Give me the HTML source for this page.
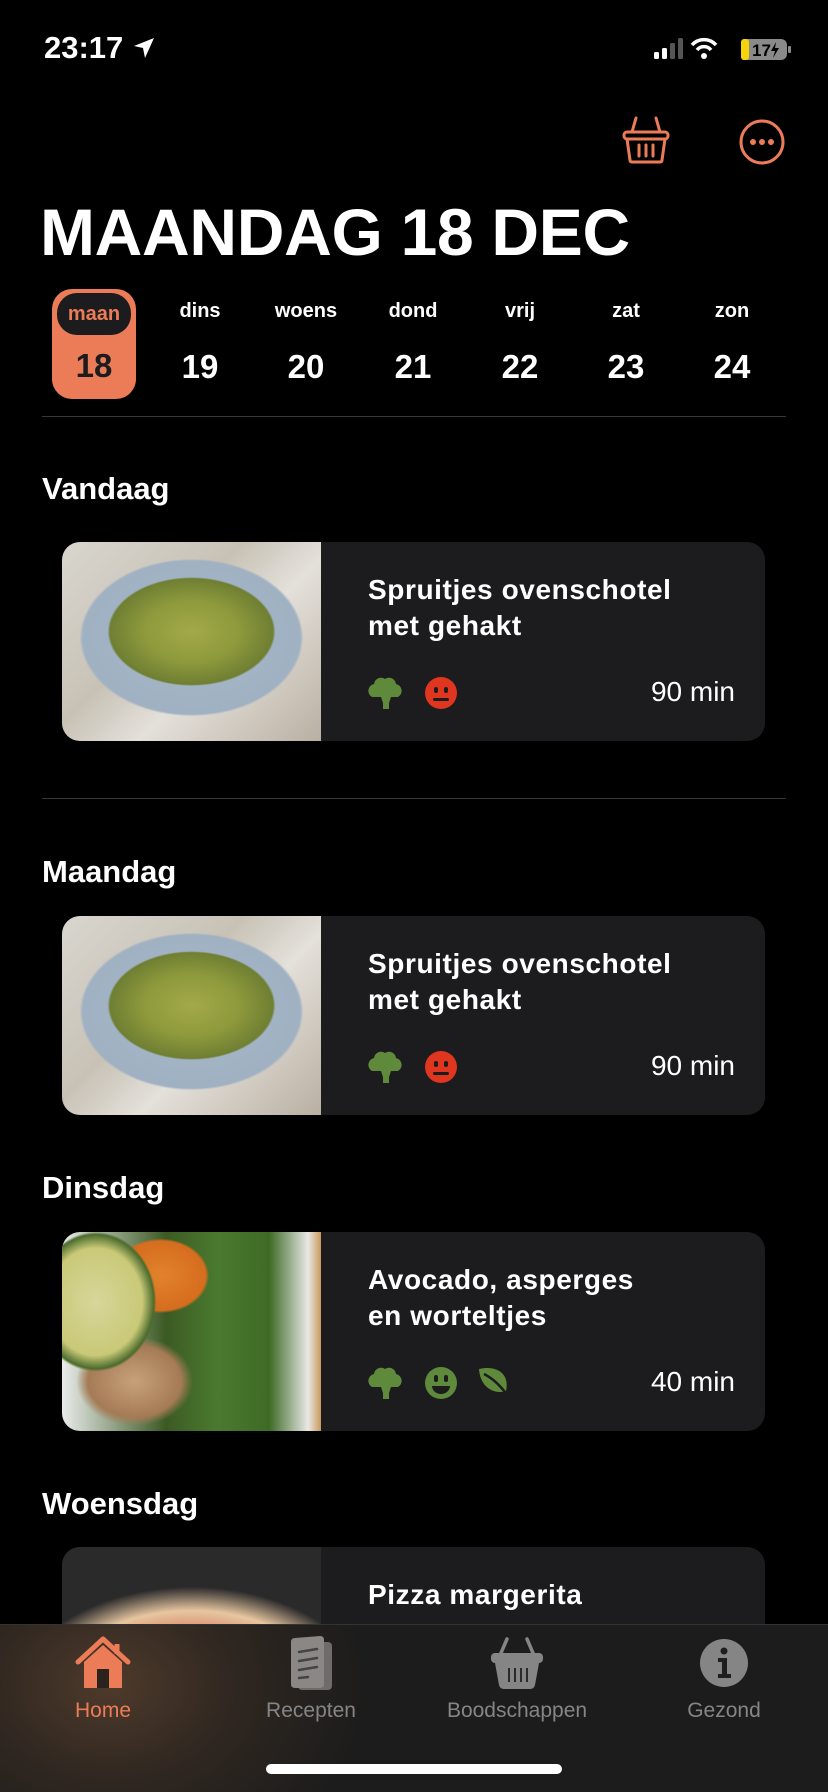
<!DOCTYPE html>
<html><head><meta charset="utf-8"><style>
*{margin:0;padding:0;box-sizing:border-box}
body{width:828px;height:1792px;background:#000;color:#fff;font-family:"Liberation Sans",sans-serif;position:relative;overflow:hidden}
.abs{position:absolute}
.time{left:44px;top:30px;font-size:31px;font-weight:600}
.title{left:40px;top:194px;font-size:66px;font-weight:700;letter-spacing:-0.3px}
.day{position:absolute;width:90px;text-align:center}
.day .l{position:absolute;top:300px;width:90px;font-size:20px;font-weight:600}
.day .n{position:absolute;top:348px;width:90px;font-size:33px;font-weight:600}
.pill{left:52px;top:289px;width:84px;height:110px;background:#ec7c57;border-radius:20px}
.pill .in{position:absolute;left:5px;top:4px;width:74px;height:42px;background:#1c1c1e;border-radius:20px;color:#ec7c57;font-size:20px;font-weight:600;text-align:center;line-height:42px}
.pill .num{position:absolute;top:58px;width:84px;text-align:center;font-size:33px;font-weight:600;color:#1c1c1e}
.hr{left:42px;width:744px;height:1px;background:#38383a}
.sec{left:42px;font-size:31px;font-weight:600}
.card{left:62px;width:703px;height:199px;background:#1c1c1e;border-radius:18px;overflow:hidden}
.card .img{position:absolute;left:0;top:0;width:259px;height:100%}
.card .t{position:absolute;left:306px;top:30px;font-size:28px;font-weight:600;line-height:36px;letter-spacing:0.6px}
.card .m{position:absolute;right:30px;top:134px;font-size:28px}
.card .ic{position:absolute;top:133px}
.cas{background:radial-gradient(ellipse 45% 38% at 50% 45%,#a3a94a 0%,#8e9a3c 40%,#6f7f33 70%,transparent 72%),radial-gradient(ellipse 60% 55% at 50% 48%,#a8b8c8 0,#9fb1c2 70%,transparent 72%),linear-gradient(135deg,#d9d6cf,#c8c2b6 40%,#e4e0da 60%,#b9b0a2)}
.avo{background:radial-gradient(ellipse 30% 45% at 13% 35%,#d8d69a 0,#c9c978 60%,#4b6b2c 75%,transparent 78%),radial-gradient(ellipse 25% 25% at 38% 22%,#e2822c 0,#d56d1e 70%,transparent 75%),radial-gradient(ellipse 30% 30% at 28% 75%,#c7a07a 0,#a57b55 60%,transparent 75%),linear-gradient(90deg,#e9ecea 0,#3c5a24 40%,#4a7a2e 60%,#3e6a26 80%,#e8e8e5 95%,#c89a5c)}
.piz{background:radial-gradient(ellipse 70% 60% at 50% 80%,#c8413a 0,#d25b40 50%,#e6c6a0 80%,#2a2a2a 100%)}
.tab{left:0;top:1624px;width:828px;height:168px;background:radial-gradient(ellipse 260px 200px at 110px 60px,#4e3a2b 0,#2e2620 50%,rgba(28,28,28,0) 100%),#1c1c1c;border-top:1px solid #333}
.tl{position:absolute;top:1699px;font-size:21px;width:200px;text-align:center;font-weight:500}
</style></head><body>
<div class="abs time">23:17 <svg width="24" height="24" viewBox="0 0 24 24" style="vertical-align:-2px"><path d="M22 2 L2 10 L11 12 L13 22 Z" fill="#fff"/></svg></div>
<svg class="abs" style="left:652px;top:36px" width="140" height="26" viewBox="0 0 140 26">
<rect x="2" y="16" width="5" height="7" rx="1.5" fill="#fff"/><rect x="10" y="12" width="5" height="11" rx="1.5" fill="#fff"/><rect x="18" y="7" width="5" height="16" rx="1.5" fill="#555"/><rect x="26" y="2" width="5" height="21" rx="1.5" fill="#555"/>
<path d="M40 9 A16 16 0 0 1 64 9" stroke="#fff" stroke-width="3.5" fill="none"/><path d="M45 14 A9 9 0 0 1 59 14" stroke="#fff" stroke-width="3.5" fill="none"/><circle cx="52" cy="20" r="3" fill="#fff"/>
<rect x="89" y="3" width="46" height="21" rx="6" fill="#8a8a8a"/><rect x="89" y="3" width="8" height="21" rx="3" fill="#f5d40a"/>
<text x="100" y="20" font-size="17" font-weight="700" fill="#000" font-family="Liberation Sans">17</text><path d="M124 6 l-5 9 h4 l-2 7 6-10 h-4z" fill="#000"/>
<rect x="136" y="10" width="3" height="7" rx="1" fill="#8a8a8a"/></svg>
<svg class="abs" style="left:620px;top:114px" width="52" height="52" viewBox="0 0 52 52" fill="none" stroke="#ec7c57" stroke-width="3" stroke-linecap="round">
<path d="M16 4 L12 18 M36 4 L40 18"/><rect x="4" y="18" width="44" height="7" rx="3"/><path d="M7 25 L10 46 Q10 48 12 48 H40 Q42 48 42 46 L45 25"/><path d="M19 31 V42 M26 31 V42 M33 31 V42"/></svg>
<svg class="abs" style="left:738px;top:118px" width="48" height="48" viewBox="0 0 48 48"><circle cx="24" cy="24" r="21" stroke="#ec7c57" stroke-width="3" fill="none"/><circle cx="15" cy="24" r="3" fill="#ec7c57"/><circle cx="24" cy="24" r="3" fill="#ec7c57"/><circle cx="33" cy="24" r="3" fill="#ec7c57"/></svg>
<div class="abs title">MAANDAG 18 DEC</div>
<div class="abs pill"><div class="in">maan</div><div class="num">18</div></div>
<div class="day" style="left:155px"><div class="l">dins</div><div class="n">19</div></div>
<div class="day" style="left:261px"><div class="l">woens</div><div class="n">20</div></div>
<div class="day" style="left:368px"><div class="l">dond</div><div class="n">21</div></div>
<div class="day" style="left:475px"><div class="l">vrij</div><div class="n">22</div></div>
<div class="day" style="left:581px"><div class="l">zat</div><div class="n">23</div></div>
<div class="day" style="left:687px"><div class="l">zon</div><div class="n">24</div></div>
<div class="abs hr" style="top:416px"></div>
<div class="abs sec" style="top:471px">Vandaag</div>
<svg width="0" height="0" style="position:absolute"><defs>
<g id="broc"><path d="M18 4 a7 7 0 0 1 11 5 a7 7 0 0 1 2 13 h-26 a7 7 0 0 1 2-13 a7 7 0 0 1 11-5z" fill="#5f8a3c"/><path d="M14 22 h10 l-2 6 v6 h-6 v-6z" fill="#5f8a3c"/></g>
<g id="sad"><circle cx="18" cy="18" r="16" fill="#e0361f"/><rect x="11" y="12" width="4" height="6" rx="2" fill="#1c1c1e"/><rect x="21" y="12" width="4" height="6" rx="2" fill="#1c1c1e"/><rect x="10" y="23" width="16" height="3" rx="1.5" fill="#1c1c1e"/></g>
<g id="happy"><circle cx="18" cy="18" r="16" fill="#5f8a3c"/><rect x="11" y="10" width="4" height="7" rx="2" fill="#1c1c1e"/><rect x="21" y="10" width="4" height="7" rx="2" fill="#1c1c1e"/><path d="M9 21 h18 a9 8 0 0 1 -18 0z" fill="#1c1c1e"/></g>
<g id="leaf"><path d="M3 4 C20 0 34 8 30 26 C18 30 4 22 3 4z" fill="#5f8a3c"/><path d="M8 9 C18 14 26 22 34 34" stroke="#1c1c1e" stroke-width="2.5" fill="none"/></g>
</defs></svg>
<div class="abs card" style="top:542px"><div class="img cas"></div><div class="t">Spruitjes ovenschotel<br>met gehakt</div>
<svg class="ic" style="left:305px" width="36" height="36"><use href="#broc"/></svg><svg class="ic" style="left:361px" width="36" height="36"><use href="#sad"/></svg><div class="m">90 min</div></div>
<div class="abs hr" style="top:798px"></div>
<div class="abs sec" style="top:854px">Maandag</div>
<div class="abs card" style="top:916px"><div class="img cas"></div><div class="t">Spruitjes ovenschotel<br>met gehakt</div>
<svg class="ic" style="left:305px" width="36" height="36"><use href="#broc"/></svg><svg class="ic" style="left:361px" width="36" height="36"><use href="#sad"/></svg><div class="m">90 min</div></div>
<div class="abs sec" style="top:1170px">Dinsdag</div>
<div class="abs card" style="top:1232px"><div class="img avo"></div><div class="t">Avocado, asperges<br>en worteltjes</div>
<svg class="ic" style="left:305px" width="36" height="36"><use href="#broc"/></svg><svg class="ic" style="left:361px" width="36" height="36"><use href="#happy"/></svg><svg class="ic" style="left:414px" width="36" height="36"><use href="#leaf"/></svg><div class="m">40 min</div></div>
<div class="abs sec" style="top:1486px">Woensdag</div>
<div class="abs card" style="top:1547px"><div class="img piz"></div><div class="t">Pizza margerita</div></div>
<div class="abs tab"></div>
<svg class="abs" style="left:74px;top:1636px" width="58" height="56" viewBox="0 0 58 56"><path d="M4 26 L29 3 L54 26" stroke="#ec7c57" stroke-width="5" fill="none" stroke-linecap="round" stroke-linejoin="round"/><path d="M43 8 v10" stroke="#ec7c57" stroke-width="5"/><path d="M10 26 L29 9 L48 26 V52 H10Z" fill="#ec7c57"/><rect x="23" y="33" width="12" height="19" fill="#2a221c"/></svg>
<svg class="abs" style="left:288px;top:1636px" width="48" height="56" viewBox="0 0 48 56"><rect x="10" y="6" width="34" height="48" rx="4" fill="#6e6b68"/><path d="M3 6 Q3 2 7 2 L32 0 Q36 0 36 4 V48 Q36 52 32 52 L7 52 Q3 52 3 48Z" fill="#8a8785"/><path d="M11 16 L29 13 M11 25 L29 22 M11 34 L29 31 M11 42 L20 41" stroke="#444" stroke-width="2.5" stroke-linecap="round"/></svg>
<svg class="abs" style="left:490px;top:1637px" width="54" height="54" viewBox="0 0 54 54"><path d="M17 2 L11 16 M37 2 L43 16" stroke="#858585" stroke-width="3.5" stroke-linecap="round"/><rect x="1" y="16" width="52" height="10" rx="4" fill="#858585"/><path d="M5 26 H49 L45 48 Q44 52 40 52 H14 Q10 52 9 48Z" fill="#858585"/><path d="M19 31 V45 M25 31 V45 M31 31 V45 M37 31 V45" stroke="#2a2a2a" stroke-width="2"/></svg>
<svg class="abs" style="left:700px;top:1638px" width="48" height="50" viewBox="0 0 48 50"><ellipse cx="24" cy="25" rx="24" ry="24" fill="#858585"/><circle cx="24" cy="13" r="3.5" fill="#1e1e1e"/><path d="M18 20 H27 V36 H31 V40 H18 V36 H22 V24 H18Z" fill="#1e1e1e"/></svg>
<div class="tl" style="left:3px;color:#ec7c57">Home</div>
<div class="tl" style="left:211px;color:#858585">Recepten</div>
<div class="tl" style="left:417px;color:#858585">Boodschappen</div>
<div class="tl" style="left:624px;color:#858585">Gezond</div>
<div class="abs" style="left:266px;top:1764px;width:296px;height:10px;border-radius:5px;background:#fff"></div>
</body></html>
